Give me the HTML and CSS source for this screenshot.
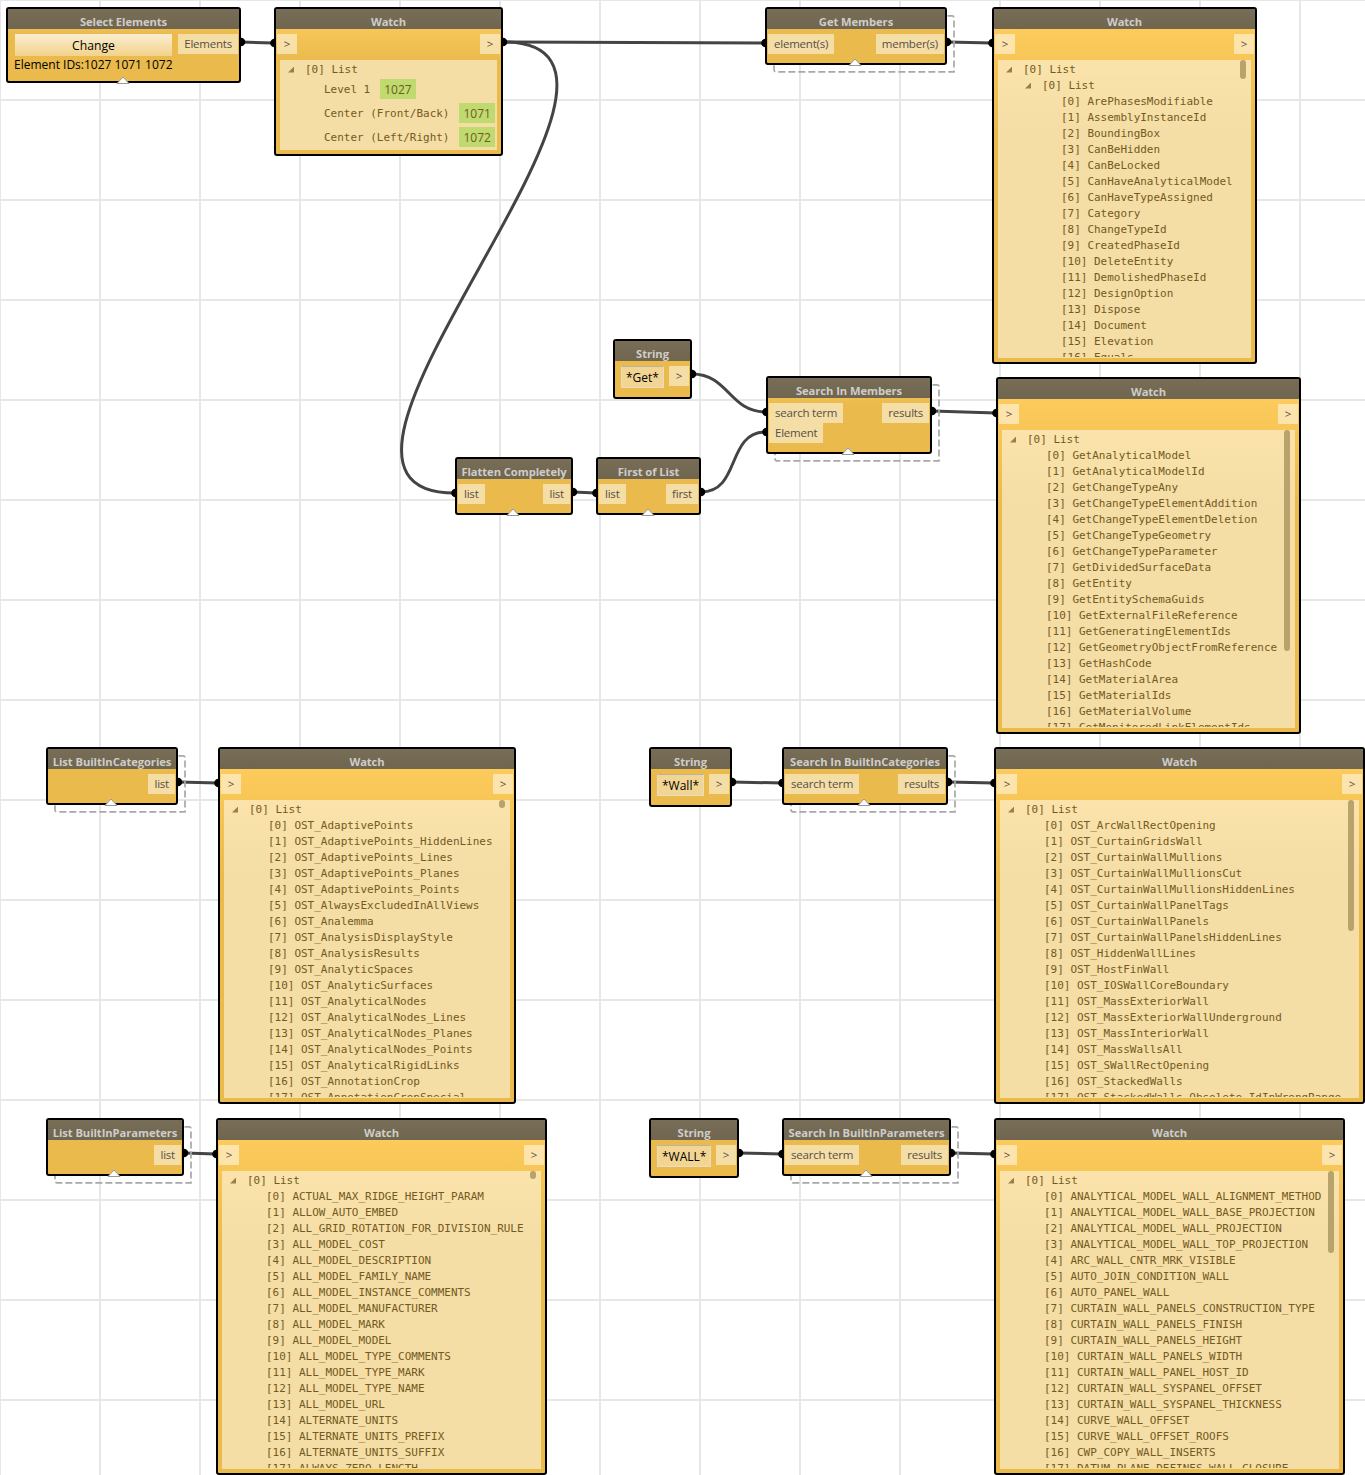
FILE: index.html
```html
<!DOCTYPE html>
<html lang="en">
<head>
<meta charset="utf-8">
<title>Element member search</title>
<link rel="stylesheet" href="styles.css">
</head>
<body>
<main class="canvas">
  <svg class="wires" width="1365" height="1475" viewBox="0 0 1365 1475">
    <g class="wire">
      <path d="M241 42L274 43"/>
      <path d="M503 42L765 43"/>
      <path d="M503 42C707 42 252 493 455 493"/>
      <path d="M947 42L992 43"/>
      <path d="M692 374C729 374 729 412 766 412"/>
      <path d="M701 492C741 492 726 432 766 432"/>
      <path d="M573 492L596 493"/>
      <path d="M932 411L996 413"/>
      <path d="M178 782L218 783"/>
      <path d="M732 782L782 783"/>
      <path d="M948 782L994 783"/>
      <path d="M184 1153L216 1154"/>
      <path d="M739 1153L782 1154"/>
      <path d="M951 1153L994 1154"/>
    </g>
    <g class="dots">
      <circle cx="241" cy="42" r="4.3"/><circle cx="274.5" cy="43" r="4.3"/>
      <circle cx="503" cy="42" r="4.3"/><circle cx="765.500" cy="43" r="4.3"/>
      <circle cx="947" cy="42" r="4.3"/><circle cx="992.500" cy="43" r="4.3"/>
      <circle cx="692" cy="374" r="4.3"/><circle cx="766.500" cy="412" r="4.3"/><circle cx="766.500" cy="432" r="4.3"/>
      <circle cx="932" cy="411" r="4.3"/><circle cx="996.500" cy="413" r="4.3"/>
      <circle cx="455.500" cy="493" r="4.3"/><circle cx="573" cy="492" r="4.3"/>
      <circle cx="596.500" cy="493" r="4.3"/><circle cx="701" cy="492" r="4.3"/>
      <circle cx="178" cy="782" r="4.3"/><circle cx="218.500" cy="783" r="4.3"/>
      <circle cx="732" cy="782" r="4.3"/><circle cx="782.500" cy="783" r="4.3"/>
      <circle cx="948" cy="782" r="4.3"/><circle cx="994.500" cy="783" r="4.3"/>
      <circle cx="184" cy="1153" r="4.3"/><circle cx="216.500" cy="1154" r="4.3"/>
      <circle cx="739" cy="1153" r="4.3"/><circle cx="782.500" cy="1154" r="4.3"/>
      <circle cx="951" cy="1153" r="4.3"/><circle cx="994.500" cy="1154" r="4.3"/>
    </g>
    <g class="ghost" transform="translate(.5 .4)">
      <path d="M947 15.500H951.500Q953.500 15.500 953.500 17.500V71.500H776Q773.500 71.500 773.500 69V64"/>
      <path d="M932 384.500H936.500Q938.500 384.500 938.500 386.500V460.500H777Q774.500 460.500 774.500 458V453"/>
      <path d="M178 755.500H182.500Q184.500 755.500 184.500 757.500V811.500H57Q54.500 811.500 54.500 809V804"/>
      <path d="M948 755.500H952.500Q954.500 755.500 954.500 757.500V811.500H793Q790.500 811.500 790.500 809V804"/>
      <path d="M184 1126.500H188.500Q190.500 1126.500 190.500 1128.500V1182.500H57Q54.500 1182.500 54.500 1180V1175"/>
      <path d="M951 1126.500H955.500Q957.500 1126.500 957.500 1128.500V1182.500H793Q790.500 1182.500 790.500 1180V1175"/>
    </g>
  </svg>

  <section class="node select-elements">
    <h2>Select Elements</h2>
    <div class="ports"><button class="change">Change</button><span class="port">Elements</span></div>
    <p class="ids">Element IDs:1027 1071 1072</p>
    <svg class="notch" viewBox="0 0 14 8"><path d="M1 7.500L7 1L13 7.500Z"/></svg>
  </section>

  <section class="node watch watch-selection">
    <h2>Watch</h2>
    <div class="ports"><span class="port io">&gt;</span><span class="port io">&gt;</span></div>
    <div class="panel">
      <div class="row root"><i class="caret"></i>[0] List</div>
      <div class="row element">Level 1<span class="chip">1027</span></div>
      <div class="row element">Center (Front/Back)<span class="chip">1071</span></div>
      <div class="row element">Center (Left/Right)<span class="chip">1072</span></div>
    </div>
  </section>

  <section class="node get-members">
    <h2>Get Members</h2>
    <div class="ports"><span class="port">element(s)</span><span class="port">member(s)</span></div>
    <svg class="notch" viewBox="0 0 14 8"><path d="M1 7.500L7 1L13 7.500Z"/></svg>
  </section>

  <section class="node watch watch-members">
    <h2>Watch</h2>
    <div class="ports"><span class="port io">&gt;</span><span class="port io">&gt;</span></div>
    <div class="panel">
      <div class="row root"><i class="caret"></i>[0] List</div>
      <div class="row root nested"><i class="caret"></i>[0] List</div>
      <ul class="items deep">
        <li>[0] ArePhasesModifiable</li>
        <li>[1] AssemblyInstanceId</li>
        <li>[2] BoundingBox</li>
        <li>[3] CanBeHidden</li>
        <li>[4] CanBeLocked</li>
        <li>[5] CanHaveAnalyticalModel</li>
        <li>[6] CanHaveTypeAssigned</li>
        <li>[7] Category</li>
        <li>[8] ChangeTypeId</li>
        <li>[9] CreatedPhaseId</li>
        <li>[10] DeleteEntity</li>
        <li>[11] DemolishedPhaseId</li>
        <li>[12] DesignOption</li>
        <li>[13] Dispose</li>
        <li>[14] Document</li>
        <li>[15] Elevation</li>
        <li>[16] Equals</li>
      </ul>
      <i class="thumb thumb-members"></i>
    </div>
  </section>

  <section class="node string string-get">
    <h2>String</h2>
    <div class="ports"><span class="input">*Get*</span><span class="port io">&gt;</span></div>
  </section>

  <section class="node search-members">
    <h2>Search In Members</h2>
    <div class="ports">
      <div class="stack"><span class="port">search term</span><span class="port">Element</span></div>
      <span class="port">results</span>
    </div>
    <svg class="notch" viewBox="0 0 14 8"><path d="M1 7.500L7 1L13 7.500Z"/></svg>
  </section>

  <section class="node flatten">
    <h2>Flatten Completely</h2>
    <div class="ports"><span class="port">list</span><span class="port">list</span></div>
    <svg class="notch" viewBox="0 0 14 8"><path d="M1 7.500L7 1L13 7.500Z"/></svg>
  </section>

  <section class="node first">
    <h2>First of List</h2>
    <div class="ports"><span class="port">list</span><span class="port">first</span></div>
    <svg class="notch" viewBox="0 0 14 8"><path d="M1 7.500L7 1L13 7.500Z"/></svg>
  </section>

  <section class="node watch watch-get">
    <h2>Watch</h2>
    <div class="ports"><span class="port io">&gt;</span><span class="port io">&gt;</span></div>
    <div class="panel">
      <div class="row root"><i class="caret"></i>[0] List</div>
      <ul class="items">
        <li>[0] GetAnalyticalModel</li>
        <li>[1] GetAnalyticalModelId</li>
        <li>[2] GetChangeTypeAny</li>
        <li>[3] GetChangeTypeElementAddition</li>
        <li>[4] GetChangeTypeElementDeletion</li>
        <li>[5] GetChangeTypeGeometry</li>
        <li>[6] GetChangeTypeParameter</li>
        <li>[7] GetDividedSurfaceData</li>
        <li>[8] GetEntity</li>
        <li>[9] GetEntitySchemaGuids</li>
        <li>[10] GetExternalFileReference</li>
        <li>[11] GetGeneratingElementIds</li>
        <li>[12] GetGeometryObjectFromReference</li>
        <li>[13] GetHashCode</li>
        <li>[14] GetMaterialArea</li>
        <li>[15] GetMaterialIds</li>
        <li>[16] GetMaterialVolume</li>
        <li>[17] GetMonitoredLinkElementIds</li>
      </ul>
      <i class="thumb thumb-get"></i>
    </div>
  </section>

  <section class="node list-categories">
    <h2>List BuiltInCategories</h2>
    <div class="ports end"><span class="port">list</span></div>
    <svg class="notch" viewBox="0 0 14 8"><path d="M1 7.500L7 1L13 7.500Z"/></svg>
  </section>

  <section class="node watch watch-categories">
    <h2>Watch</h2>
    <div class="ports"><span class="port io">&gt;</span><span class="port io">&gt;</span></div>
    <div class="panel">
      <div class="row root"><i class="caret"></i>[0] List</div>
      <ul class="items">
        <li>[0] OST_AdaptivePoints</li>
        <li>[1] OST_AdaptivePoints_HiddenLines</li>
        <li>[2] OST_AdaptivePoints_Lines</li>
        <li>[3] OST_AdaptivePoints_Planes</li>
        <li>[4] OST_AdaptivePoints_Points</li>
        <li>[5] OST_AlwaysExcludedInAllViews</li>
        <li>[6] OST_Analemma</li>
        <li>[7] OST_AnalysisDisplayStyle</li>
        <li>[8] OST_AnalysisResults</li>
        <li>[9] OST_AnalyticSpaces</li>
        <li>[10] OST_AnalyticSurfaces</li>
        <li>[11] OST_AnalyticalNodes</li>
        <li>[12] OST_AnalyticalNodes_Lines</li>
        <li>[13] OST_AnalyticalNodes_Planes</li>
        <li>[14] OST_AnalyticalNodes_Points</li>
        <li>[15] OST_AnalyticalRigidLinks</li>
        <li>[16] OST_AnnotationCrop</li>
        <li>[17] OST_AnnotationCropSpecial</li>
      </ul>
      <i class="thumb thumb-short"></i>
    </div>
  </section>

  <section class="node string string-wall">
    <h2>String</h2>
    <div class="ports"><span class="input">*Wall*</span><span class="port io">&gt;</span></div>
  </section>

  <section class="node search-categories">
    <h2>Search In BuiltInCategories</h2>
    <div class="ports"><span class="port">search term</span><span class="port">results</span></div>
    <svg class="notch" viewBox="0 0 14 8"><path d="M1 7.500L7 1L13 7.500Z"/></svg>
  </section>

  <section class="node watch watch-wall">
    <h2>Watch</h2>
    <div class="ports"><span class="port io">&gt;</span><span class="port io">&gt;</span></div>
    <div class="panel">
      <div class="row root"><i class="caret"></i>[0] List</div>
      <ul class="items">
        <li>[0] OST_ArcWallRectOpening</li>
        <li>[1] OST_CurtainGridsWall</li>
        <li>[2] OST_CurtainWallMullions</li>
        <li>[3] OST_CurtainWallMullionsCut</li>
        <li>[4] OST_CurtainWallMullionsHiddenLines</li>
        <li>[5] OST_CurtainWallPanelTags</li>
        <li>[6] OST_CurtainWallPanels</li>
        <li>[7] OST_CurtainWallPanelsHiddenLines</li>
        <li>[8] OST_HiddenWallLines</li>
        <li>[9] OST_HostFinWall</li>
        <li>[10] OST_IOSWallCoreBoundary</li>
        <li>[11] OST_MassExteriorWall</li>
        <li>[12] OST_MassExteriorWallUnderground</li>
        <li>[13] OST_MassInteriorWall</li>
        <li>[14] OST_MassWallsAll</li>
        <li>[15] OST_SWallRectOpening</li>
        <li>[16] OST_StackedWalls</li>
        <li>[17] OST_StackedWalls_Obsolete_IdInWrongRange</li>
      </ul>
      <i class="thumb thumb-wall"></i>
    </div>
  </section>

  <section class="node list-parameters">
    <h2>List BuiltInParameters</h2>
    <div class="ports end"><span class="port">list</span></div>
    <svg class="notch" viewBox="0 0 14 8"><path d="M1 7.500L7 1L13 7.500Z"/></svg>
  </section>

  <section class="node watch watch-parameters">
    <h2>Watch</h2>
    <div class="ports"><span class="port io">&gt;</span><span class="port io">&gt;</span></div>
    <div class="panel">
      <div class="row root"><i class="caret"></i>[0] List</div>
      <ul class="items">
        <li>[0] ACTUAL_MAX_RIDGE_HEIGHT_PARAM</li>
        <li>[1] ALLOW_AUTO_EMBED</li>
        <li>[2] ALL_GRID_ROTATION_FOR_DIVISION_RULE</li>
        <li>[3] ALL_MODEL_COST</li>
        <li>[4] ALL_MODEL_DESCRIPTION</li>
        <li>[5] ALL_MODEL_FAMILY_NAME</li>
        <li>[6] ALL_MODEL_INSTANCE_COMMENTS</li>
        <li>[7] ALL_MODEL_MANUFACTURER</li>
        <li>[8] ALL_MODEL_MARK</li>
        <li>[9] ALL_MODEL_MODEL</li>
        <li>[10] ALL_MODEL_TYPE_COMMENTS</li>
        <li>[11] ALL_MODEL_TYPE_MARK</li>
        <li>[12] ALL_MODEL_TYPE_NAME</li>
        <li>[13] ALL_MODEL_URL</li>
        <li>[14] ALTERNATE_UNITS</li>
        <li>[15] ALTERNATE_UNITS_PREFIX</li>
        <li>[16] ALTERNATE_UNITS_SUFFIX</li>
        <li>[17] ALWAYS_ZERO_LENGTH</li>
      </ul>
      <i class="thumb thumb-short"></i>
    </div>
  </section>

  <section class="node string string-upper">
    <h2>String</h2>
    <div class="ports"><span class="input">*WALL*</span><span class="port io">&gt;</span></div>
  </section>

  <section class="node search-parameters">
    <h2>Search In BuiltInParameters</h2>
    <div class="ports"><span class="port">search term</span><span class="port">results</span></div>
    <svg class="notch" viewBox="0 0 14 8"><path d="M1 7.500L7 1L13 7.500Z"/></svg>
  </section>

  <section class="node watch watch-upper">
    <h2>Watch</h2>
    <div class="ports"><span class="port io">&gt;</span><span class="port io">&gt;</span></div>
    <div class="panel">
      <div class="row root"><i class="caret"></i>[0] List</div>
      <ul class="items">
        <li>[0] ANALYTICAL_MODEL_WALL_ALIGNMENT_METHOD</li>
        <li>[1] ANALYTICAL_MODEL_WALL_BASE_PROJECTION</li>
        <li>[2] ANALYTICAL_MODEL_WALL_PROJECTION</li>
        <li>[3] ANALYTICAL_MODEL_WALL_TOP_PROJECTION</li>
        <li>[4] ARC_WALL_CNTR_MRK_VISIBLE</li>
        <li>[5] AUTO_JOIN_CONDITION_WALL</li>
        <li>[6] AUTO_PANEL_WALL</li>
        <li>[7] CURTAIN_WALL_PANELS_CONSTRUCTION_TYPE</li>
        <li>[8] CURTAIN_WALL_PANELS_FINISH</li>
        <li>[9] CURTAIN_WALL_PANELS_HEIGHT</li>
        <li>[10] CURTAIN_WALL_PANELS_WIDTH</li>
        <li>[11] CURTAIN_WALL_PANEL_HOST_ID</li>
        <li>[12] CURTAIN_WALL_SYSPANEL_OFFSET</li>
        <li>[13] CURTAIN_WALL_SYSPANEL_THICKNESS</li>
        <li>[14] CURVE_WALL_OFFSET</li>
        <li>[15] CURVE_WALL_OFFSET_ROOFS</li>
        <li>[16] CWP_COPY_WALL_INSERTS</li>
        <li>[17] DATUM_PLANE_DEFINES_WALL_CLOSURE</li>
      </ul>
      <i class="thumb thumb-upper"></i>
    </div>
  </section>
</main>
</body>
</html>
```
FILE: styles.css
```css
* { box-sizing: border-box; }

body {
  margin: 0;
  font: 12px/20px "Open Sans", "Noto Sans", sans-serif;
  background: #fff;
}

.canvas {
  position: relative;
  width: 1365px;
  height: 1475px;
  overflow: hidden;
  background-image:
    linear-gradient(#e7e7e7 2px, transparent 2px),
    linear-gradient(90deg, #e7e7e7 2px, transparent 2px);
  background-size: 100px 100px;
  background-position: -1px -1px;
}

.wires { position: absolute; left: 0; top: 0; }
.wire { fill: none; stroke: #444; stroke-width: 3; }
.dots { fill: #000; }
.ghost { fill: none; stroke: #a8a8a8; stroke-width: 1.7; stroke-dasharray: 7 3; }

/* Nodes */
.node {
  position: absolute;
  display: flex;
  flex-direction: column;
  height: 58px;
  border: 2px solid #000;
  border-radius: 3px;
  background: linear-gradient(#ffce5e, #eaba4d 36%);
}

.node h2 {
  flex: none;
  height: 20px;
  margin: 0;
  padding-top: 3px;
  background: linear-gradient(#786d56, #70654e);
  color: #cfcdc9;
  font-size: 11.2px;
  font-weight: 700;
  letter-spacing: -.06px;
  line-height: 20px;
  text-align: center;
  white-space: nowrap;
}

.ports {
  display: flex;
  justify-content: space-between;
  align-items: flex-start;
  padding: 5px 1px 0;
}
.ports.end { justify-content: flex-end; }

.stack { display: flex; flex-direction: column; align-items: flex-start; }

.port {
  height: 20px;
  padding: 0 6px;
  background: rgba(255, 255, 255, .5);
  color: #555046;
  font-size: 11.5px;
  letter-spacing: -.22px;
  line-height: 20px;
  white-space: nowrap;
}
.port.io { width: 20px; padding: 0; letter-spacing: 0; text-align: center; }

.change {
  width: 157px;
  height: 22px;
  margin-left: 6px;
  padding: 0;
  border: 0;
  background: linear-gradient(#fbedd0, #f2d38c);
  color: #000;
  font: 12.2px/23px "Open Sans", sans-serif;
}

.ids { margin: -1px 0 0 6px; color: #000; line-height: 20px; white-space: nowrap; }

.input {
  height: 22px;
  margin-left: 5px;
  padding: 0 4px;
  border: 1px solid #e8dcc2;
  border-top-color: #b9b3a6;
  border-radius: 1px;
  background: #f3d593;
  color: #000;
  line-height: 21px;
}

.notch {
  position: absolute;
  left: calc(50% - 7.8px);
  bottom: -3px;
  width: 14px;
  height: 8px;
}
.notch path { fill: #fff; stroke: #999; stroke-width: 1; }

/* Watch contents */
.watch { height: 357px; }

.panel {
  position: relative;
  flex: 1;
  min-height: 0;
  margin: 6px 4px 4px;
  padding-top: 2px;
  overflow: hidden;
  border-bottom: 1px solid transparent;
  background: rgba(255, 255, 255, .5);
  color: #735a21;
  font: 10.97px/16px "DejaVu Sans Mono", monospace;
  white-space: nowrap;
}

.row { display: flex; align-items: center; height: 16px; }
.row.root { padding-left: 8px; }
.row.nested { padding-left: 27px; }
.row.element { height: 24px; padding-left: 44px; }

.caret {
  width: 6px;
  height: 6px;
  margin: 0 11px 1px 0;
  background: #9a8048;
  clip-path: polygon(100% 0, 100% 100%, 0 100%);
}

.chip {
  height: 20px;
  margin: 0 0 2px 10px;
  padding: 0 4px;
  background: #bfdb70;
  font: 12px/21px "Open Sans", sans-serif;
}

.items { margin: 0; padding: 0 0 0 44px; list-style: none; }
.items.deep { padding-left: 63px; }

.thumb {
  position: absolute;
  top: 0;
  right: 5px;
  width: 6px;
  border-radius: 3px;
  background: #b8a36c;
}
.thumb-members { height: 19px; }
.thumb-get { height: 221px; }
.thumb-short { height: 8px; }
.thumb-wall { height: 131px; }
.thumb-upper { height: 82px; }

/* Placement on the canvas */
.select-elements { left: 6px; top: 7px; width: 235px; height: 76px; }
.watch-selection { left: 274px; top: 7px; width: 229px; height: 149px; }
.get-members { left: 765px; top: 7px; width: 182px; }
.watch-members { left: 992px; top: 7px; width: 265px; }
.string-get { left: 613px; top: 339px; width: 79px; height: 60px; }
.search-members { left: 766px; top: 376px; width: 166px; height: 78px; }
.flatten { left: 455px; top: 457px; width: 118px; }
.first { left: 596px; top: 457px; width: 105px; }
.watch-get { left: 996px; top: 377px; width: 305px; }
.list-categories { left: 46px; top: 747px; width: 132px; }
.watch-categories { left: 218px; top: 747px; width: 298px; }
.string-wall { left: 649px; top: 747px; width: 83px; height: 60px; }
.search-categories { left: 782px; top: 747px; width: 166px; }
.watch-wall { left: 994px; top: 747px; width: 371px; }
.list-parameters { left: 46px; top: 1118px; width: 138px; }
.watch-parameters { left: 216px; top: 1118px; width: 331px; }
.string-upper { left: 649px; top: 1118px; width: 90px; height: 60px; }
.search-parameters { left: 782px; top: 1118px; width: 169px; }
.watch-upper { left: 994px; top: 1118px; width: 351px; }
```
